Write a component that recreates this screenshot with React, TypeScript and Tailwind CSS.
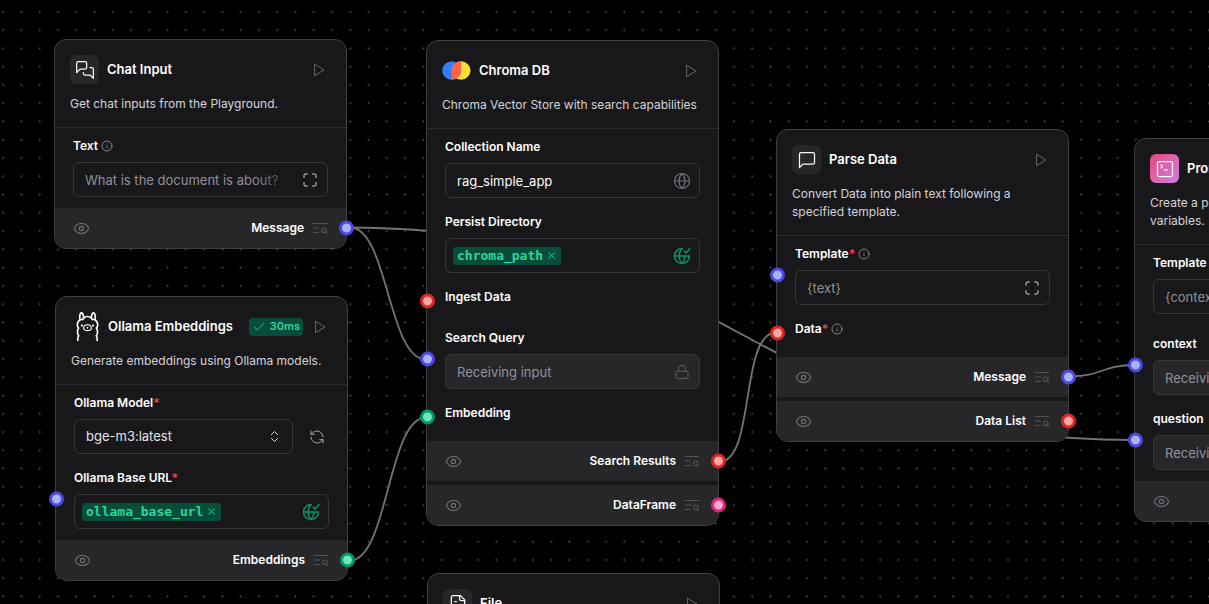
import type { ReactNode } from "react";
import { SiOllama } from "react-icons/si";
import { Check, ChevronsUpDown, Eye, Globe, Info, Lock, Maximize, RefreshCcw, X } from "lucide-react";

type Tone = "indigo" | "red" | "emerald" | "pink";

const TONES: Record<Tone, string> = {
  indigo: "border-[#4f46e5] bg-[#a5b4fc]",
  red: "border-[#dc2626] bg-[#fca5a5]",
  emerald: "border-[#059669] bg-[#6ee7b7]",
  pink: "border-[#db2777] bg-[#f9a8d4]",
};

function Stroke({ children, className }: { children: ReactNode; className: string }) {
  return (
    <svg
      viewBox="0 0 24 24"
      fill="none"
      stroke="currentColor"
      strokeWidth={1.5}
      strokeLinecap="round"
      strokeLinejoin="round"
      className={className}
      aria-hidden="true"
    >
      {children}
    </svg>
  );
}

function PlayButton({ name }: { name: string }) {
  return (
    <button type="button" aria-label={`Run ${name}`} className="p-[5px] text-[#71717a]">
      <Stroke className="size-[14px]">
        <path d="M5 2.500l15.500 9.500L5 21.500z" />
      </Stroke>
    </button>
  );
}

function TextSearch() {
  return (
    <Stroke className="size-[18px] text-[#52525b]">
      <path d="M21 6H3M10 12H3M10 18H3M21 19l-1.9-1.9" />
      <circle cx="17" cy="15" r="3" />
    </Stroke>
  );
}

function GlobeCheck() {
  return (
    <svg
      viewBox="0 0 24 24"
      fill="none"
      stroke="currentColor"
      strokeWidth={2}
      strokeLinecap="round"
      strokeLinejoin="round"
      className="size-[18px] text-[#059669]"
      aria-hidden="true"
    >
      <path d="M12 2A10 10 0 1 0 22 12H2" />
      <path d="M12 2a15 15 0 0 0 0 20 15 15 0 0 0 4-10" />
      <path d="M15 5.500l2.500 2.500 5-6" />
    </svg>
  );
}

function Handle({ tone, side }: { tone: Tone; side: "left" | "right" }) {
  return (
    <span
      className={`absolute top-1/2 z-10 size-[15px] -translate-y-1/2 rounded-full border-[3px] ${
        side === "left" ? "-left-[25px]" : "-right-2"
      } ${TONES[tone]}`}
    />
  );
}

function Tile({ children, className = "bg-[#27272a]" }: { children: ReactNode; className?: string }) {
  return (
    <span className={`flex size-[29px] items-center justify-center rounded-md text-[#fafafa] ${className}`}>
      {children}
    </span>
  );
}

function Card({
  place,
  icon,
  title,
  description,
  badge,
  children,
  footer,
}: {
  place: string;
  icon: ReactNode;
  title: string;
  description: string;
  badge?: string;
  children?: ReactNode;
  footer?: ReactNode;
}) {
  return (
    <article className={`absolute w-[293px] rounded-xl border border-[#3f3f46] bg-[#18181b] ${place}`}>
      <header className="border-b border-[#2c2c30] px-[15px] pt-[15px] pb-[14px]">
        <div className="flex h-[29px] items-center">
          {icon}
          <h2 className="ml-2 flex-1 text-[13px] font-semibold whitespace-nowrap text-white">{title}</h2>
          {badge && (
            <span className="mr-[5px] flex h-[18px] items-center gap-1 rounded bg-[#064e3b] px-[3px] text-[11px] font-semibold text-[#34d399]">
              <Check className="size-[14px]" strokeWidth={1.5} />
              {badge}
            </span>
          )}
          <PlayButton name={title} />
        </div>
        <p className="mt-[11px] text-[12px] leading-[18px] text-[#d4d4d8]">{description}</p>
      </header>
      {children && <div className="flex flex-col gap-[15px] px-[18px] pt-[9px] pb-[11px]">{children}</div>}
      {footer && <footer className="flex flex-col gap-1">{footer}</footer>}
    </article>
  );
}

function Field({
  label,
  id,
  required,
  info,
  handle,
  children,
}: {
  label: string;
  id?: string;
  required?: boolean;
  info?: boolean;
  handle?: Tone;
  children?: ReactNode;
}) {
  return (
    <div className={`relative ${children ? "" : "pb-2"}`}>
      {handle && <Handle tone={handle} side="left" />}
      <div className="flex h-[18px] items-center">
        <label htmlFor={id} className="text-[12px] leading-[18px] font-semibold text-white">
          {label}
          {required && <span className="text-[#ef4444]">*</span>}
        </label>
        {info && <Info className="ml-[3px] size-3 text-[#a1a1aa]" strokeWidth={1.5} />}
      </div>
      {children && <div className="mt-[7px]">{children}</div>}
    </div>
  );
}

function TextBox({
  id,
  value,
  placeholder,
  disabled,
  fade,
  icon,
}: {
  id: string;
  value?: string;
  placeholder?: string;
  disabled?: boolean;
  fade?: boolean;
  icon: ReactNode;
}) {
  return (
    <div
      className={`flex h-[35px] items-center rounded-md border border-[#36363b] pr-[8px] pl-[11px] ${
        disabled ? "bg-[#27272a]" : "bg-[#18181b]"
      }`}
    >
      <div className="relative min-w-0 flex-1">
        <input
          id={id}
          type="text"
          defaultValue={value}
          placeholder={placeholder}
          disabled={disabled}
          className="block w-full bg-transparent text-[13px] leading-[18px] text-[#fafafa] outline-none placeholder:text-[#a1a1aa]/90"
        />
        {fade && (
          <span className="pointer-events-none absolute inset-y-0 right-0 w-12 bg-linear-to-r from-[#18181b]/0 to-[#18181b]" />
        )}
      </div>
      <span className="flex size-[18px] items-center justify-center">{icon}</span>
    </div>
  );
}

function Variable({ name }: { name: string }) {
  return (
    <div className="flex h-[35px] items-center justify-between rounded-md border border-[#36363b] pr-[8px] pl-[7px]">
      <span className="flex h-[18px] items-center rounded-[3px] bg-[#064e3b] px-1 font-['DejaVu_Sans_Mono',monospace] text-[13px] font-bold text-[#34d399]">
        {name}
        <button type="button" aria-label={`Remove ${name}`} className="ml-[3px]">
          <X className="size-[11px]" strokeWidth={2} />
        </button>
      </span>
      <button type="button" aria-label="Global variables">
        <GlobeCheck />
      </button>
    </div>
  );
}

function Output({ name, tone }: { name?: string; tone?: Tone }) {
  return (
    <div className="relative flex h-10 items-center bg-[#27272a] pr-[17px] pl-[18px] last:rounded-b-[11px]">
      <button type="button" aria-label={`Toggle ${name ?? "output"}`} className="text-[#71717a]">
        <Eye className="size-[17px]" strokeWidth={1.5} />
      </button>
      {name && <span className="mr-[7px] ml-auto text-[12px] font-semibold text-white">{name}</span>}
      {name && <TextSearch />}
      {tone && <Handle tone={tone} side="right" />}
    </div>
  );
}

const expandIcon = <Maximize className="size-4 text-[#e4e4e7]" strokeWidth={1.5} />;
const lockIcon = <Lock className="size-4 text-[#5f5f68]" strokeWidth={1.5} />;

export default function App() {
  return (
    <main className="relative h-screen w-full overflow-hidden bg-black font-['Inter',sans-serif]">
      <svg className="absolute inset-0 size-full" aria-hidden="true">
        <defs>
          <pattern id="dots" x="-6" y="2.700" width="18.270" height="18.270" patternUnits="userSpaceOnUse">
            <circle cx="9.130" cy="9.130" r="0.950" fill="#55555a" />
          </pattern>
        </defs>
        <rect width="100%" height="100%" fill="url(#dots)" />
        <g fill="none" stroke="#737373" strokeWidth="1.800">
          <path d="M350 227.500C388 227.500 388 359.500 426 359.500" />
          <path d="M346 227.500C741 227.500 741 440 1134 440" />
          <path d="M350 560.500C388 560.500 388 417.500 426 417.500" />
          <path d="M720 461.500C755 461.500 740 332.500 776 332.500" />
          <path d="M1070 376.500C1102 376.500 1102 365 1134 365" />
        </g>
      </svg>

      <Card
        place="left-[54px] top-[39px]"
        title="Chat Input"
        description="Get chat inputs from the Playground."
        icon={
          <Tile>
            <Stroke className="size-5">
              <path d="M14 9a2 2 0 0 1-2 2H6l-4 4V4a2 2 0 0 1 2-2h8a2 2 0 0 1 2 2z" />
              <path d="M18 9h2a2 2 0 0 1 2 2v11l-4-4h-6a2 2 0 0 1-2-2v-1" />
            </Stroke>
          </Tile>
        }
        footer={<Output name="Message" tone="indigo" />}
      >
        <Field label="Text" id="chat-text" info>
          <TextBox id="chat-text" placeholder="What is the document is about?" fade icon={expandIcon} />
        </Field>
      </Card>

      <Card
        place="left-[55px] top-[296px]"
        title="Ollama Embeddings"
        description="Generate embeddings using Ollama models."
        badge="30ms"
        icon={
          <span className="flex size-[29px] items-center pl-[2px] text-white">
            <SiOllama className="size-[29px] shrink-0" />
          </span>
        }
        footer={<Output name="Embeddings" tone="emerald" />}
      >
        <Field label="Ollama Model" id="ollama-model" required>
          <div className="flex items-center">
            <div className="relative flex-1">
              <select
                id="ollama-model"
                className="block h-[35px] w-full appearance-none rounded-md border border-[#36363b] bg-[#18181b] pl-[11px] text-[13px] text-[#e4e4e7]"
              >
                <option>bge-m3:latest</option>
              </select>
              <ChevronsUpDown
                className="pointer-events-none absolute top-[10px] right-[11px] size-[15px] text-[#e4e4e7]"
                strokeWidth={1.5}
              />
            </div>
            <button type="button" aria-label="Refresh models" className="mr-1 ml-4 text-[#a1a1aa]">
              <RefreshCcw className="size-4" strokeWidth={1.5} />
            </button>
          </div>
        </Field>
        <Field label="Ollama Base URL" required handle="indigo">
          <Variable name="ollama_base_url" />
        </Field>
      </Card>

      <Card
        place="left-[426px] top-[40px]"
        title="Chroma DB"
        description="Chroma Vector Store with search capabilities"
        icon={
          <svg viewBox="0 0 29 29" className="size-[29px]" aria-hidden="true">
            <ellipse cx="19" cy="14.500" rx="9.500" ry="9.300" fill="#ffde2d" />
            <ellipse cx="9.700" cy="14.500" rx="9.500" ry="9.300" fill="#327eff" />
            <path d="M19 5.200v9.300c0 5.100-4.200 9.300-9.500 9.300v-9.300c0-5.100 4.200-9.300 9.500-9.300z" fill="#ff6446" />
          </svg>
        }
        footer={
          <>
            <Output name="Search Results" tone="red" />
            <Output name="DataFrame" tone="pink" />
          </>
        }
      >
        <Field label="Collection Name" id="collection">
          <TextBox
            id="collection"
            value="rag_simple_app"
            icon={<Globe className="size-[18px] text-[#71717a]" strokeWidth={1.5} />}
          />
        </Field>
        <Field label="Persist Directory">
          <Variable name="chroma_path" />
        </Field>
        <Field label="Ingest Data" handle="red" />
        <Field label="Search Query" id="query" handle="indigo">
          <TextBox id="query" placeholder="Receiving input" disabled icon={lockIcon} />
        </Field>
        <Field label="Embedding" handle="emerald" />
      </Card>

      <Card
        place="left-[776px] top-[129px]"
        title="Parse Data"
        description="Convert Data into plain text following a specified template."
        icon={
          <Tile>
            <Stroke className="size-5">
              <path d="M21 15a2 2 0 0 1-2 2H7l-4 4V5a2 2 0 0 1 2-2h14a2 2 0 0 1 2 2z" />
            </Stroke>
          </Tile>
        }
        footer={
          <>
            <Output name="Message" tone="indigo" />
            <Output name="Data List" tone="red" />
          </>
        }
      >
        <Field label="Template" id="parse-template" required info handle="indigo">
          <TextBox id="parse-template" placeholder="{text}" icon={expandIcon} />
        </Field>
        <Field label="Data" required info handle="red" />
      </Card>

      <Card
        place="left-[1134px] top-[138px]"
        title="Prompt"
        description="Create a prompt template with dynamic variables."
        icon={
          <Tile className="bg-linear-to-br from-[#e8437a] to-[#d07be6]">
            <Stroke className="size-5">
              <path d="M7 11l2-2-2-2M11 13h4" />
              <rect x="3" y="3" width="18" height="18" rx="2" />
            </Stroke>
          </Tile>
        }
        footer={<Output />}
      >
        <div className="pb-[6px]">
          <Field label="Template" id="prompt-template">
            <TextBox id="prompt-template" placeholder="{context}" icon={expandIcon} />
          </Field>
        </div>
        <Field label="context" id="context" handle="indigo">
          <TextBox id="context" placeholder="Receiving input" disabled icon={lockIcon} />
        </Field>
        <Field label="question" id="question" handle="indigo">
          <TextBox id="question" placeholder="Receiving input" disabled icon={lockIcon} />
        </Field>
      </Card>

      <Card
        place="left-[427px] top-[573px]"
        title="File"
        description="Load a file to be used in your project."
        icon={
          <Tile>
            <Stroke className="size-5">
              <path d="M15 2H6a2 2 0 0 0-2 2v16a2 2 0 0 0 2 2h12a2 2 0 0 0 2-2V7z" />
              <path d="M14 2v4a2 2 0 0 0 2 2h4M10 9H8M16 13H8M16 17H8" />
            </Stroke>
          </Tile>
        }
      />
    </main>
  );
}
